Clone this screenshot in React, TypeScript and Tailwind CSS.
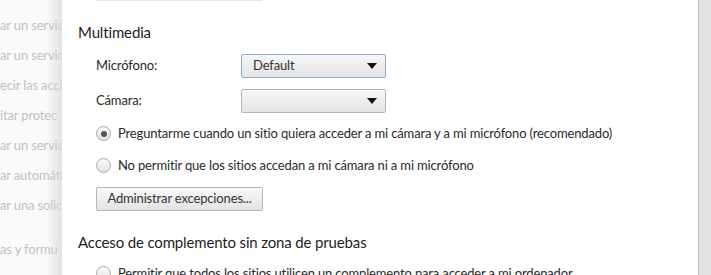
import React from "react";

const bgItems = [
  { text: "inhabilitar c", top: "mt-[-12px]" },
  { text: "ar un servic", top: "mt-[16px]" },
  { text: "ar un servic", top: "mt-[16px]" },
  { text: "ecir las acci", top: "mt-[16px]" },
  { text: "itar protec", top: "mt-[16px]" },
  { text: "ar un servic", top: "mt-[16px]" },
  { text: "ar automátic", top: "mt-[16px]" },
  { text: "ar una solici", top: "mt-[16px]" },
  { text: "as y formu", top: "mt-[30px]" },
];

function Radio({ checked }: { checked?: boolean }) {
  return (
    <span className="flex h-[15px] w-[15px] shrink-0 items-center justify-center rounded-full border border-[#a9a9a9] bg-gradient-to-b from-[#fbfbfb] to-[#e2e2e2] shadow-[0_1px_0_rgba(255,255,255,0.8)]">
      {checked && <span className="h-[6px] w-[6px] rounded-full bg-[#555]" />}
    </span>
  );
}

function Select({ value, focused }: { value?: string; focused?: boolean }) {
  return (
    <div
      className={`flex h-[24px] w-[145px] items-center justify-between rounded-[2px] border bg-gradient-to-b from-[#f7f7f7] to-[#e4e4e4] pl-[11px] pr-[8px] ${
        focused ? "border-[#8cabcf]" : "border-[#b5b5b5]"
      }`}
    >
      <span className="text-[13px] text-[#333]">{value}</span>
      <svg width="10" height="6" viewBox="0 0 10 6">
        <path d="M0 0h10L5 6z" fill="#111" />
      </svg>
    </div>
  );
}

export default function App() {
  return (
    <div className="flex h-[275px] w-[711px] overflow-hidden bg-white font-['Lato',sans-serif] tracking-[-0.15px] text-[#2a2a2a]">
      <div className="relative w-[62px] shrink-0 overflow-hidden bg-[#fafafa]">
        <div className="flex flex-col whitespace-nowrap text-[13px] leading-[14px] text-[#c2c2c2]">
          {bgItems.map((it, i) => (
            <span key={i} className={it.top}>
              {it.text}
            </span>
          ))}
        </div>
        <div className="absolute inset-y-0 right-0 w-[16px] bg-gradient-to-r from-transparent to-[#d8d8d8]/70" />
      </div>

      <div className="flex flex-1 flex-col pl-[16px]">
        <div className="ml-[17px] h-[2px] w-[167px] border-b border-[#e6e6e6]" />

        <h2 className="mt-[22px] text-[15px] leading-[18px] text-[#1e1e1e]">Multimedia</h2>

        <div className="ml-[18px] mt-[13px] flex flex-col">
          <div className="flex items-center">
            <span className="w-[145px] text-[13px]">Micrófono:</span>
            <Select value="Default" focused />
          </div>
          <div className="mt-[11px] flex items-center">
            <span className="w-[145px] text-[13px]">Cámara:</span>
            <Select />
          </div>

          <label className="mt-[11px] flex items-center gap-[7px] text-[13px]">
            <Radio checked />
            <span>Preguntarme cuando un sitio quiera acceder a mi cámara y a mi micrófono (recomendado)</span>
          </label>
          <label className="mt-[12px] flex items-center gap-[7px] text-[13px]">
            <Radio />
            <span>No permitir que los sitios accedan a mi cámara ni a mi micrófono</span>
          </label>

          <button className="mt-[12px] h-[24px] w-[167px] rounded-[2px] border border-[#b8b8b8] bg-gradient-to-b from-[#f8f8f8] to-[#e3e3e3] text-[13px] text-[#333]">
            Administrar excepciones...
          </button>
        </div>

        <h2 className="mt-[22px] text-[15px] leading-[18px] text-[#1e1e1e]">
          Acceso de complemento sin zona de pruebas
        </h2>

        <label className="ml-[18px] mt-[13px] flex items-center gap-[7px] text-[13px]">
          <Radio />
          <span>Permitir que todos los sitios utilicen un complemento para acceder a mi ordenador</span>
        </label>
      </div>

      <div className="w-[13px] shrink-0 border-l border-[#bdbdbd] bg-[#e3e3e3]" />
    </div>
  );
}
